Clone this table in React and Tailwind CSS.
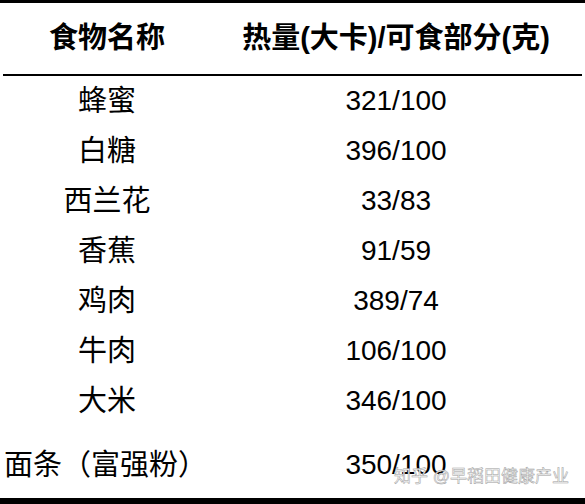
export default function App() {
  const rows = [
    ["蜂蜜", "321/100"],
    ["白糖", "396/100"],
    ["西兰花", "33/83"],
    ["香蕉", "91/59"],
    ["鸡肉", "389/74"],
    ["牛肉", "106/100"],
    ["大米", "346/100"],
  ];
  const font = { fontFamily: '"Liberation Sans", "Noto Sans CJK SC", sans-serif' };
  return (
    <div
      className="relative w-[585px] h-[504px] bg-white text-black overflow-hidden"
      style={font}
    >
      <div className="h-[3px] bg-black" />
      <div className="flex h-[71px] items-center text-[29px] font-bold leading-none">
        <div className="w-[214px] text-center">食物名称</div>
        <div className="flex-1 pr-[7px] text-center">热量(大卡)/可食部分(克)</div>
      </div>
      <div className="mx-[3px] h-[2px] bg-black" />
      {rows.map(([a, b]) => (
        <div key={a} className="flex h-[50px] items-center leading-none">
          <div className="w-[214px] text-center text-[29px]">{a}</div>
          <div className="flex-1 pr-[7px] text-center text-[28px]">{b}</div>
        </div>
      ))}
      <div className="flex h-[72px] items-center pt-[6px] leading-none">
        <div className="w-[214px] pl-[4px] text-left text-[29px] whitespace-nowrap">面条（富强粉）</div>
        <div className="flex-1 pr-[7px] text-center text-[28px]">350/100</div>
      </div>
      <div className="h-[6px] bg-black" />
      <div className="absolute left-[394px] top-[468px] text-[17px] leading-none text-[#fafafa] [-webkit-text-stroke:0.5px_#a0a0a0] whitespace-nowrap">
        知乎 @早稻田健康产业
      </div>
    </div>
  );
}
